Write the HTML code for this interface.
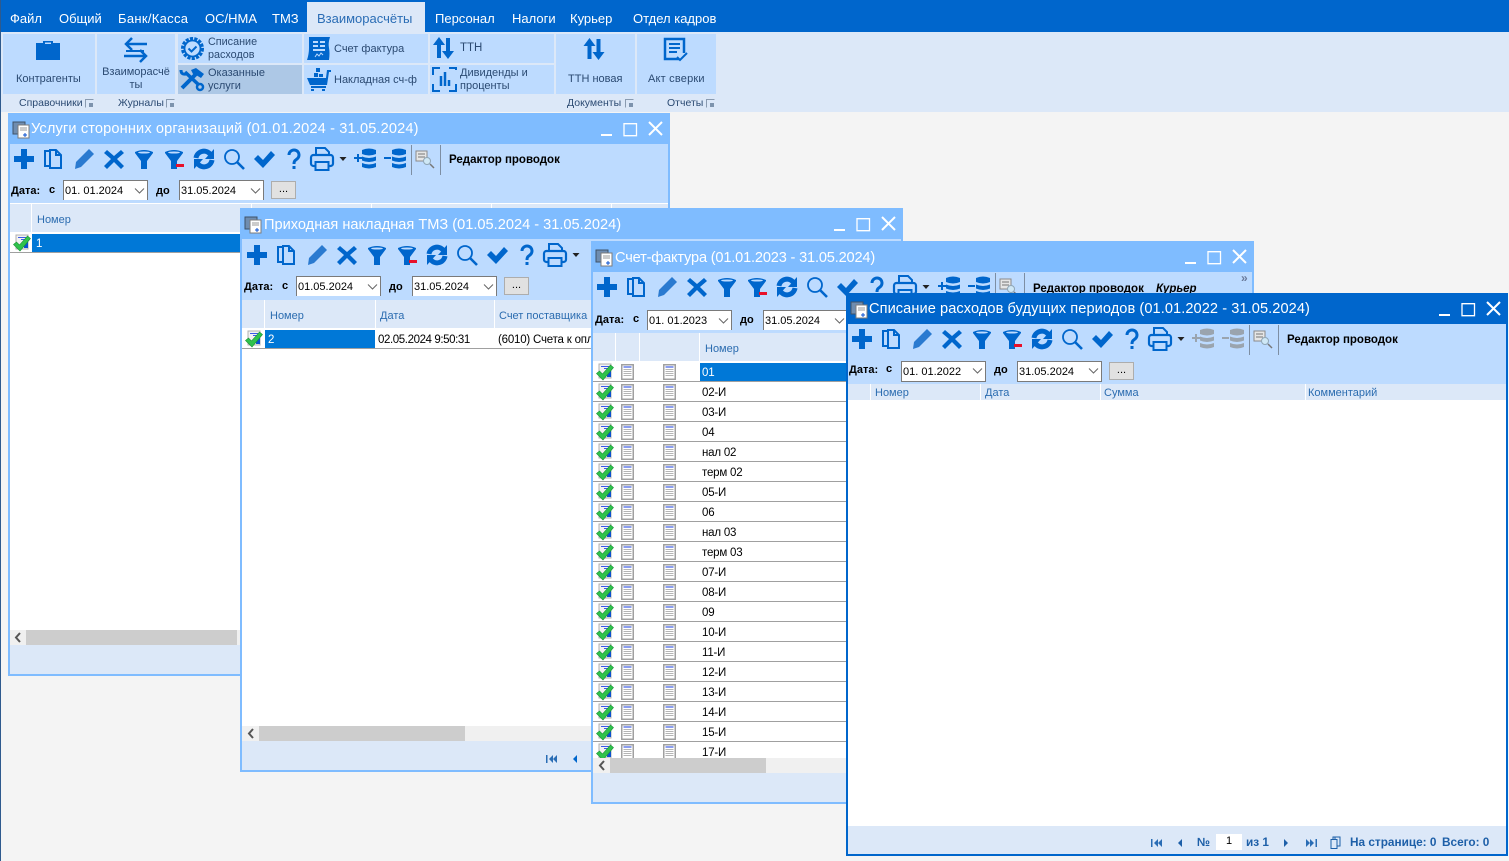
<!DOCTYPE html>
<html><head><meta charset="utf-8">
<style>
html,body{margin:0;padding:0}
body{width:1509px;height:861px;overflow:hidden;position:relative;background:#f4f4f4;font-family:"Liberation Sans",sans-serif;font-size:11.5px;color:#000}
div,span,svg{position:absolute;white-space:nowrap}
.edge{left:0;top:0;width:1px;height:861px;background:#2e5a8e}
.menu{left:0;top:0;width:1509px;height:32px;background:#0066cc}
.m{top:10px;color:#fff;font-size:13px;line-height:15px}
.rib{left:0;top:32px;width:1509px;height:80px;background:#dce8f8}
.b{background:#bddbff}
.rt{color:#2b4a72;font-size:11px;line-height:13px}
.g{top:97px;color:#2b4a72;font-size:10.5px;line-height:12px}
.gi{top:99px;width:7px;height:7px;border:1px solid #8a9bb0;border-right-color:#dce8f8;border-bottom-color:#dce8f8}
.gi::after{content:"";position:absolute;left:3px;top:3px;width:4px;height:4px;background:#7d93ad}
.w{background:#fff;overflow:hidden;box-sizing:border-box;border:2px solid #7fbcff}
.w.a{border-color:#0066cc}
.tt{left:-2px;top:-2px;right:-2px;height:31px;background:#7fbcff}
.a .tt{background:#0066cc}
.ti{left:21px;top:5px;color:#fff;font-size:14.6px;line-height:18px}
.tb{left:0;top:29px;right:0;height:59px;background:#bddbff}
.ed{font-weight:bold;font-size:11.5px;line-height:14px}
.dl{font-weight:bold;font-size:11px;line-height:13px}
.cb{width:85px;height:20px;box-sizing:border-box;background:#fff;border:1px solid #7a7a7a;border-bottom:0;font-size:11px;line-height:21px;padding-left:1px}
.dd{width:25px;height:18px;box-sizing:border-box;background:#e1e1e1;border:1px solid #adadad;text-align:center;font-size:11px;line-height:15px}
.h{background:#dce8f8;color:#2b6cb0;font-size:11px}
.h span{top:9px;line-height:14px}
.sep{width:1px;height:30px;background:#7d8ea3}
.sb{background:#f0f0f0;height:15px}
.th{background:#cdcdcd;height:15px;top:0}
.ft{background:#dce8f8}
.r{left:0;width:661px;height:18px;border-bottom:1px solid #a0a0a0}
.c{left:108px;top:1px;width:300px;height:18px;line-height:19px;padding-left:1px;font-size:11.5px;letter-spacing:-.2px}
.pg{color:#1d5fa8;font-weight:bold;font-size:11.8px;line-height:14px}
</style></head>
<body>
<svg width="0" height="0" style="left:0;top:0">
<defs>
<symbol id="tools" viewBox="0 0 400 24">
<path fill="#0066cc" d="M9 2h6v7h7v6h-7v7H9v-7H2V9h7z"/>
<g transform="translate(30 0)" fill="none" stroke="#0066cc" stroke-width="2"><path d="M8 4H3v15h5"/><path d="M8 3h6l5 5v13H8z"/><path d="M14 3v5h5"/></g>
<g transform="translate(60 0)"><path fill="#2a7ad0" d="M17 2l5 5L9 20l-6 2 1-7z"/></g>
<g transform="translate(90 0)"><path fill="#0066cc" d="M5 3l7 6 7-6 3 3-7 6 7 7-3 3-7-7-7 7-3-3 7-7-7-6z"/></g>
<g transform="translate(120 0)"><path fill="#0066cc" d="M3 5q9-4 18 0v1l-6 8v8H9v-8L3 6z"/><ellipse cx="12" cy="5.500" rx="6" ry="1" fill="#bddbff"/></g>
<g transform="translate(150 0)"><path fill="#0066cc" d="M3 5q9-4 18 0v1l-6 8v8H9v-8L3 6z"/><ellipse cx="12" cy="5.500" rx="6" ry="1" fill="#bddbff"/><rect x="14" y="17" width="8" height="3" fill="#e8102a"/></g>
<g transform="translate(180 0)"><path fill="none" stroke="#0066cc" stroke-width="5" d="M4 11a8 8 0 0 1 14-4M20 13a8 8 0 0 1-14 4"/><path fill="#0066cc" d="M22 2v10h-9zM2 22V12h9z"/></g>
<g transform="translate(210 0)" fill="none" stroke="#0066cc"><circle cx="10" cy="10" r="7" stroke-width="1.8"/><path stroke-width="2.6" d="M15 15l7 7"/></g>
<g transform="translate(240 0)"><path fill="#0066cc" d="M2 12l4-4 5 5 8-9 4 4-12 13z"/></g>
<g transform="translate(270 0)"><path fill="none" stroke="#0066cc" stroke-width="3" d="M7 8a5 5 0 1 1 8 4c-2 1.500-3 2-3 5"/><rect x="10.500" y="19" width="3" height="3" fill="#0066cc"/></g>
<g transform="translate(298 0)"><path fill="none" stroke="#0066cc" stroke-width="2" d="M6 8V1h9l4 4v3"/><rect x="1" y="8" width="22" height="11" rx="2.500" fill="none" stroke="#0066cc" stroke-width="2.200"/><rect x="5.500" y="15" width="13" height="8" fill="#bddbff" stroke="#0066cc" stroke-width="2"/></g>
<path fill="#222" d="M327.500 10h7l-3.500 4z"/>
</symbol>
<symbol id="dbp" viewBox="0 0 24 24"><g fill="#0066cc"><path d="M9 3q7-3 14 0v4q-7 3-14 0zM9 9.500q7 3 14 0v4q-7 3-14 0zM9 16q7 3 14 0v4q-7 3-14 0z"/><path d="M1 10h3V7h2v3h3v2H6v3H4v-3H1z"/></g></symbol>
<symbol id="dbm" viewBox="0 0 24 24"><g fill="#0066cc"><path d="M9 3q7-3 14 0v4q-7 3-14 0zM9 9.500q7 3 14 0v4q-7 3-14 0zM9 16q7 3 14 0v4q-7 3-14 0z"/><path d="M1 10h7v2H1z"/></g></symbol>
<symbol id="dbpg" viewBox="0 0 24 24"><g fill="#9aa4ae"><path d="M9 3q7-3 14 0v4q-7 3-14 0zM9 9.500q7 3 14 0v4q-7 3-14 0zM9 16q7 3 14 0v4q-7 3-14 0z"/><path d="M1 10h3V7h2v3h3v2H6v3H4v-3H1z"/></g></symbol>
<symbol id="dbmg" viewBox="0 0 24 24"><g fill="#9aa4ae"><path d="M9 3q7-3 14 0v4q-7 3-14 0zM9 9.500q7 3 14 0v4q-7 3-14 0zM9 16q7 3 14 0v4q-7 3-14 0z"/><path d="M1 10h7v2H1z"/></g></symbol>
<symbol id="ds" viewBox="0 0 20 20"><rect x="1" y="2" width="11" height="10" fill="#e6e6e6" stroke="#8a8a8a"/><path stroke="#777" d="M3 5h7M3 8h7"/><circle cx="12" cy="12" r="3.500" fill="#cfe8f6" stroke="#8fa5b5"/><path stroke="#777" stroke-width="1.500" d="M15 15l4 4"/></symbol>
<symbol id="wi" viewBox="0 0 18 18"><rect x="1" y="1" width="12" height="12" fill="#6f8db0" stroke="#3f5268"/><rect x="6" y="4" width="11" height="13" fill="#fff" stroke="#7c7c7c"/><path stroke="#999" d="M8 7h7M8 9h7"/><path stroke="#0a50d0" d="M11 14h4M13 12v4"/></symbol>
<symbol id="st" viewBox="0 0 18 18"><rect x="3" y="1" width="12" height="14" fill="#f2f2f2" stroke="#b0b0b0"/><path stroke="#3a5ae8" d="M5 3.500h8M8 5.500h5"/><path fill="#0a50d0" d="M11 8h4v6h-4z"/><path fill="#2fc24c" stroke="#1b9436" stroke-width=".6" d="M.5 10.500l3-2.500 3 3 8-9 3 2.500L7 17z"/></symbol>
<symbol id="doc" viewBox="0 0 13 16"><rect x=".75" y=".75" width="11.500" height="14.500" fill="#fff" stroke="#a0a0a0" stroke-width="1.500"/><path stroke="#1a3fe0" d="M2.500 3h8"/><path stroke="#b5b5b5" d="M2.500 5.500h8M2.500 7.500h8M2.500 9.500h8M2.500 11.500h8"/></symbol>
<symbol id="winb" viewBox="0 0 66 18"><path fill="#fff" d="M0 13h11v2H0z"/><path fill="none" stroke="#fff" stroke-width="1.300" d="M23 2.700h12.500v12H23z"/><path stroke="#fff" stroke-width="2" d="M48 1l13 13M61 1L48 14"/></symbol>
<symbol id="chv" viewBox="0 0 11 6"><path fill="none" stroke="#666" d="M1 .5l4.500 4.500L10 .5"/></symbol>
<symbol id="sl" viewBox="0 0 8 11"><path fill="none" stroke="#555" stroke-width="2" d="M6 1L2 5.500 6 10"/></symbol>
</defs>
</svg>

<div class="menu"></div>
<div class="m" style="left:10px;top:11px">Файл</div>
<div class="m" style="left:59px;top:11px">Общий</div>
<div class="m" style="left:118px;top:11px;letter-spacing:.3px">Банк/Касса</div>
<div class="m" style="left:205px;top:11px">ОС/НМА</div>
<div class="m" style="left:272px;top:11px">ТМЗ</div>
<div style="left:307px;top:2px;width:118px;height:30px;background:#dce8f8"></div>
<div class="m" style="left:317px;top:11px;color:#2a6db5">Взаиморасчёты</div>
<div class="m" style="left:435px;top:11px">Персонал</div>
<div class="m" style="left:512px;top:11px">Налоги</div>
<div class="m" style="left:570px;top:11px">Курьер</div>
<div class="m" style="left:633px;top:11px">Отдел кадров</div>

<div class="rib"></div>
<div class="b" style="left:3px;top:34px;width:92px;height:60px"></div>
<div class="b" style="left:97px;top:34px;width:78px;height:60px"></div>
<div class="b" style="left:178px;top:34px;width:124px;height:29px"></div>
<div style="left:178px;top:65px;width:124px;height:29px;background:#adc8e6"></div>
<div class="b" style="left:304px;top:34px;width:124px;height:29px"></div>
<div class="b" style="left:304px;top:65px;width:124px;height:29px"></div>
<div class="b" style="left:430px;top:34px;width:124px;height:29px"></div>
<div class="b" style="left:430px;top:65px;width:124px;height:29px"></div>
<div class="b" style="left:556px;top:34px;width:79px;height:60px"></div>
<div class="b" style="left:637px;top:34px;width:79px;height:60px"></div>

<svg style="left:36px;top:40px" width="24" height="20" viewBox="0 0 24 20"><path fill="#0066cc" d="M0 3h7V1h10v2h7v17H0zM9 2.500V4h6V2.500z"/></svg>
<svg style="left:123px;top:37px" width="26" height="26" viewBox="0 0 26 26" fill="none" stroke="#0066cc" stroke-width="2.500"><path d="M24 7H3M9 1L3 7l6 6"/><path d="M1 19h22M17 13l6 6-6 6"/><path d="M3 14h18" stroke-width="2"/></svg>
<svg style="left:180px;top:36px" width="25" height="25" viewBox="0 0 25 25"><circle cx="12.500" cy="12.500" r="9.500" fill="none" stroke="#0066cc" stroke-width="4" stroke-dasharray="3 1.200"/><circle cx="12.500" cy="12.500" r="8" fill="#bddbff" stroke="#0066cc" stroke-width="1.800"/><path fill="none" stroke="#0066cc" stroke-width="2" d="M8.500 12.500l3 3 5-5"/></svg>
<svg style="left:179px;top:67px" width="26" height="25" viewBox="0 0 26 25" fill="none" stroke="#0066cc"><path stroke-width="4" d="M3 21L19 5"/><path fill="#0066cc" stroke="none" d="M12 3l5-2 8 6-3 4-5-3-3-1z"/><path stroke-width="3.500" d="M6 5l15 14"/><path stroke-width="3" d="M2 3q0 5 5 4"/><circle cx="21" cy="20" r="3" stroke-width="2.500" fill="#adc8e6"/></svg>
<svg style="left:306px;top:36px" width="25" height="25" viewBox="0 0 25 25"><path fill="#0066cc" d="M3 1h21q-2 6-1 11t0 12H1q2-6 2-12T3 1z"/><path stroke="#bddbff" stroke-width="2" d="M7 6h5M14 6h5M7 10h5M14 10h5M7 14h12"/><path stroke="#bddbff" fill="none" d="M9 21l2-3 2 2 2-3 2 2"/></svg>
<svg style="left:306px;top:67px" width="25" height="25" viewBox="0 0 25 25"><path fill="#0066cc" d="M1 11h19l1-8h4v2h-2l-2 13H4zM5 19h15v2H5zM5 22h3v2H5zM16 22h3v2h-3zM8 6h4v4H8zM13 7h4v3h-4zM10 1h4v4h-4z"/></svg>
<svg style="left:432px;top:36px" width="24" height="24" viewBox="0 0 24 24"><path fill="#0066cc" d="M6.500 1l6 8h-4v13h-4V9h-4zM13.500 2h4v13h4l-6 8-6-8h4z" transform="translate(.5 0)"/></svg>
<svg style="left:432px;top:67px" width="25" height="25" viewBox="0 0 25 25" fill="none" stroke="#0066cc" stroke-width="2"><path d="M8 1H1v7M17 1h7v2M24 17v7h-7M8 24H1v-7"/><path stroke-width="2.500" d="M9 9v10M13 5v14M17 13v6"/></svg>
<svg style="left:583px;top:37px" width="24" height="24" viewBox="0 0 24 24"><path fill="#0066cc" d="M6.500 1l6 8h-4v13h-4V9h-4zM13.500 2h4v13h4l-6 8-6-8h4z"/></svg>
<svg style="left:663px;top:37px" width="26" height="26" viewBox="0 0 26 26"><path fill="none" stroke="#0066cc" stroke-width="2.500" d="M16 22H2V2h19v14"/><path stroke="#0066cc" stroke-width="2" d="M6 7h11M6 11h11M6 15h8"/><path fill="none" stroke="#0066cc" stroke-width="2" d="M14 20l3 3 7-7"/></svg>

<div class="rt" style="left:16px;top:73px">Контрагенты</div>
<div class="rt" style="left:101px;top:66px;width:70px;text-align:center">Взаиморасчё<br>ты</div>
<div class="rt" style="left:208px;top:36px;line-height:12.500px;font-size:10.800px">Списание<br>расходов</div>
<div class="rt" style="left:208px;top:67px;line-height:13px">Оказанные<br>услуги</div>
<div class="rt" style="left:334px;top:43px">Счет фактура</div>
<div class="rt" style="left:334px;top:74px">Накладная сч-ф</div>
<div class="rt" style="left:460px;top:42px;font-size:11.500px">ТТН</div>
<div class="rt" style="left:460px;top:67px;line-height:13px">Дивиденды и<br>проценты</div>
<div class="rt" style="left:568px;top:73px">ТТН новая</div>
<div class="rt" style="left:648px;top:73px;letter-spacing:.2px">Акт сверки</div>
<div class="g" style="left:19px">Справочники</div><div class="gi" style="left:85px"></div>
<div class="g" style="left:118px">Журналы</div><div class="gi" style="left:166px"></div>
<div class="g" style="left:567px">Документы</div><div class="gi" style="left:625px"></div>
<div class="g" style="left:667px">Отчеты</div><div class="gi" style="left:706px"></div>

<!-- Window 1 -->
<div class="w" style="left:8px;top:113px;width:662px;height:563px">
 <div class="tt"></div>
 <svg style="left:2px;top:6px" width="18" height="18"><use href="#wi"/></svg>
 <div class="ti" style="letter-spacing:.13px">Услуги сторонних организаций (01.01.2024 - 31.05.2024)</div>
 <svg style="left:591px;top:6px" width="66" height="18"><use href="#winb"/></svg>
 <div class="tb"></div>
 <svg style="left:2px;top:32px" width="400" height="24"><use href="#tools"/></svg>
 <svg style="left:343px;top:32px" width="24" height="24"><use href="#dbp"/></svg>
 <svg style="left:373px;top:32px" width="24" height="24"><use href="#dbm"/></svg>
 <div class="sep" style="left:401px;top:30px"></div>
 <svg style="left:405px;top:34px" width="20" height="20"><use href="#ds"/></svg>
 <div class="sep" style="left:430px;top:30px"></div>
 <div class="ed" style="left:439px;top:38px">Редактор проводок</div>
 <div class="dl" style="left:1px;top:70px">Дата:</div><div class="dl" style="left:39px;top:69px">с</div>
 <div class="cb" style="left:53px;top:65px">01. 01.2024</div>
 <svg style="left:124px;top:73px" width="11" height="6"><use href="#chv"/></svg>
 <div class="dl" style="left:146px;top:70px">до</div>
 <div class="cb" style="left:169px;top:65px">31.05.2024</div>
 <svg style="left:240px;top:73px" width="11" height="6"><use href="#chv"/></svg>
 <div class="dd" style="left:261px;top:66px">...</div>
 <div class="h" style="left:0;top:89px;width:660px;height:28px"><span style="left:27px">Номер</span></div>
 <div style="left:21px;top:89px;width:1px;height:28px;background:#fff"></div>
 <div style="left:241px;top:89px;width:1px;height:28px;background:#fff"></div>
 <div style="left:361px;top:89px;width:1px;height:28px;background:#fff"></div>
 <div style="left:481px;top:89px;width:1px;height:28px;background:#fff"></div>
 <div style="left:601px;top:89px;width:1px;height:28px;background:#fff"></div>
 <svg style="left:3px;top:119px" width="18" height="18"><use href="#st"/></svg>
 <div style="left:22px;top:119px;width:219px;height:18px;background:#0078d7;color:#fff;line-height:21px;padding-left:4px;box-sizing:border-box">1</div>
 <div style="left:0;top:137px;width:660px;height:1px;background:#a0a0a0"></div>
 <div class="sb" style="left:0;top:515px;width:660px"><div class="th" style="left:16px;width:211px"></div><svg style="left:4px;top:2px" width="8" height="11"><use href="#sl"/></svg></div>
 <div class="ft" style="left:0;top:530px;width:660px;height:31px"></div>
</div>

<!-- Window 2 -->
<div class="w" style="left:240px;top:208px;width:663px;height:564px">
 <div class="tt"></div>
 <svg style="left:2px;top:6px" width="18" height="18"><use href="#wi"/></svg>
 <div class="ti" style="left:22px;top:6px">Приходная накладная ТМЗ (01.05.2024 - 31.05.2024)</div>
 <svg style="left:592px;top:6px" width="66" height="18"><use href="#winb"/></svg>
 <div class="tb" style="height:61px"></div>
 <svg style="left:3px;top:33px" width="400" height="24"><use href="#tools"/></svg>
 <div class="dl" style="left:2px;top:71px">Дата:</div><div class="dl" style="left:40px;top:70px">с</div>
 <div class="cb" style="left:54px;top:66px">01.05.2024</div>
 <svg style="left:125px;top:74px" width="11" height="6"><use href="#chv"/></svg>
 <div class="dl" style="left:147px;top:71px">до</div>
 <div class="cb" style="left:170px;top:66px">31.05.2024</div>
 <svg style="left:241px;top:74px" width="11" height="6"><use href="#chv"/></svg>
 <div class="dd" style="left:262px;top:67px">...</div>
 <div class="h" style="left:0;top:90px;width:661px;height:28px"><span style="left:28px">Номер</span><span style="left:138px">Дата</span><span style="left:257px">Счет поставщика</span></div>
 <div style="left:22px;top:90px;width:1px;height:28px;background:#fff"></div>
 <div style="left:133px;top:90px;width:1px;height:28px;background:#fff"></div>
 <div style="left:252px;top:90px;width:1px;height:28px;background:#fff"></div>
 <svg style="left:3px;top:120px" width="18" height="18"><use href="#st"/></svg>
 <div style="left:23px;top:120px;width:110px;height:18px;background:#0078d7;color:#fff;line-height:21px;padding-left:3px;box-sizing:border-box">2</div>
 <div style="left:136px;top:120px;line-height:21px;letter-spacing:-.4px">02.05.2024 9:50:31</div>
 <div style="left:256px;top:120px;line-height:21px;letter-spacing:-.2px">(6010) Счета к опл</div>
 <div style="left:0;top:138px;width:661px;height:1px;background:#a0a0a0"></div>
 <div class="sb" style="left:0;top:516px;width:661px"><div class="th" style="left:17px;width:206px"></div><svg style="left:5px;top:2px" width="8" height="11"><use href="#sl"/></svg></div>
 <div class="ft" style="left:0;top:531px;width:661px;height:31px"></div>
 <svg style="left:303px;top:544px" width="12" height="10"><path fill="#2a6db5" d="M1 1h1.500v8H1zM8 1v8L4 5zM12 1v8L8 5z"/></svg>
 <svg style="left:329px;top:544px" width="8" height="10"><path fill="#0066cc" d="M6 1v8L2 5z"/></svg>
</div>

<!-- Window 3 -->
<div class="w" style="left:591px;top:241px;width:663px;height:563px">
 <div class="tt"></div>
 <svg style="left:2px;top:6px" width="18" height="18"><use href="#wi"/></svg>
 <div class="ti" style="left:22px;top:6px;letter-spacing:-.18px">Счет-фактура (01.01.2023 - 31.05.2024)</div>
 <svg style="left:592px;top:6px" width="66" height="18"><use href="#winb"/></svg>
 <div class="tb" style="height:61px"></div>
 <svg style="left:2px;top:32px" width="400" height="24"><use href="#tools"/></svg>
 <svg style="left:344px;top:32px" width="24" height="24"><use href="#dbp"/></svg>
 <svg style="left:374px;top:32px" width="24" height="24"><use href="#dbm"/></svg>
 <div class="sep" style="left:402px;top:30px"></div>
 <svg style="left:406px;top:34px" width="20" height="20"><use href="#ds"/></svg>
 <div class="sep" style="left:431px;top:30px"></div>
 <div class="ed" style="left:440px;top:39px">Редактор проводок</div>
 <div class="ed" style="left:563px;top:39px;font-style:italic">Курьер</div>
 <div style="left:648px;top:29px;color:#6a7a9a;font-size:12px;font-weight:bold;line-height:12px">»</div>
 <div class="dl" style="left:2px;top:71px">Дата:</div><div class="dl" style="left:40px;top:70px">с</div>
 <div class="cb" style="left:54px;top:67px">01. 01.2023</div>
 <svg style="left:125px;top:75px" width="11" height="6"><use href="#chv"/></svg>
 <div class="dl" style="left:147px;top:71px">до</div>
 <div class="cb" style="left:170px;top:67px">31.05.2024</div>
 <svg style="left:241px;top:75px" width="11" height="6"><use href="#chv"/></svg>
 <div class="h" style="left:0;top:90px;width:661px;height:28px"><span style="left:112px">Номер</span></div>
 <div style="left:22px;top:90px;width:1px;height:28px;background:#fff"></div>
 <div style="left:46px;top:90px;width:1px;height:28px;background:#fff"></div>
 <div style="left:106px;top:90px;width:1px;height:28px;background:#fff"></div>
 <div style="left:0;top:120px;width:661px;height:395px;overflow:hidden">
  <div class="r" style="top:0"><div style="left:107px;top:0;width:554px;height:18px;background:#0078d7"></div><div class="c" style="color:#fff">01</div></div>
  <div class="r" style="top:20px"><div class="c">02-И</div></div>
  <div class="r" style="top:40px"><div class="c">03-И</div></div>
  <div class="r" style="top:60px"><div class="c">04</div></div>
  <div class="r" style="top:80px"><div class="c">нал 02</div></div>
  <div class="r" style="top:100px"><div class="c">терм 02</div></div>
  <div class="r" style="top:120px"><div class="c">05-И</div></div>
  <div class="r" style="top:140px"><div class="c">06</div></div>
  <div class="r" style="top:160px"><div class="c">нал 03</div></div>
  <div class="r" style="top:180px"><div class="c">терм 03</div></div>
  <div class="r" style="top:200px"><div class="c">07-И</div></div>
  <div class="r" style="top:220px"><div class="c">08-И</div></div>
  <div class="r" style="top:240px"><div class="c">09</div></div>
  <div class="r" style="top:260px"><div class="c">10-И</div></div>
  <div class="r" style="top:280px"><div class="c">11-И</div></div>
  <div class="r" style="top:300px"><div class="c">12-И</div></div>
  <div class="r" style="top:320px"><div class="c">13-И</div></div>
  <div class="r" style="top:340px"><div class="c">14-И</div></div>
  <div class="r" style="top:360px"><div class="c">15-И</div></div>
  <div class="r" style="top:380px"><div class="c">17-И</div></div>
  <svg style="left:3px;top:0" width="18" height="400"><use href="#st" y="0" width="18" height="18"/><use href="#st" y="20" width="18" height="18"/><use href="#st" y="40" width="18" height="18"/><use href="#st" y="60" width="18" height="18"/><use href="#st" y="80" width="18" height="18"/><use href="#st" y="100" width="18" height="18"/><use href="#st" y="120" width="18" height="18"/><use href="#st" y="140" width="18" height="18"/><use href="#st" y="160" width="18" height="18"/><use href="#st" y="180" width="18" height="18"/><use href="#st" y="200" width="18" height="18"/><use href="#st" y="220" width="18" height="18"/><use href="#st" y="240" width="18" height="18"/><use href="#st" y="260" width="18" height="18"/><use href="#st" y="280" width="18" height="18"/><use href="#st" y="300" width="18" height="18"/><use href="#st" y="320" width="18" height="18"/><use href="#st" y="340" width="18" height="18"/><use href="#st" y="360" width="18" height="18"/><use href="#st" y="380" width="18" height="18"/></svg>
  <svg style="left:28px;top:0" width="13" height="400"><use href="#doc" y="1" width="13" height="16"/><use href="#doc" y="21" width="13" height="16"/><use href="#doc" y="41" width="13" height="16"/><use href="#doc" y="61" width="13" height="16"/><use href="#doc" y="81" width="13" height="16"/><use href="#doc" y="101" width="13" height="16"/><use href="#doc" y="121" width="13" height="16"/><use href="#doc" y="141" width="13" height="16"/><use href="#doc" y="161" width="13" height="16"/><use href="#doc" y="181" width="13" height="16"/><use href="#doc" y="201" width="13" height="16"/><use href="#doc" y="221" width="13" height="16"/><use href="#doc" y="241" width="13" height="16"/><use href="#doc" y="261" width="13" height="16"/><use href="#doc" y="281" width="13" height="16"/><use href="#doc" y="301" width="13" height="16"/><use href="#doc" y="321" width="13" height="16"/><use href="#doc" y="341" width="13" height="16"/><use href="#doc" y="361" width="13" height="16"/><use href="#doc" y="381" width="13" height="16"/></svg>
  <svg style="left:70px;top:0" width="13" height="400"><use href="#doc" y="1" width="13" height="16"/><use href="#doc" y="21" width="13" height="16"/><use href="#doc" y="41" width="13" height="16"/><use href="#doc" y="61" width="13" height="16"/><use href="#doc" y="81" width="13" height="16"/><use href="#doc" y="101" width="13" height="16"/><use href="#doc" y="121" width="13" height="16"/><use href="#doc" y="141" width="13" height="16"/><use href="#doc" y="161" width="13" height="16"/><use href="#doc" y="181" width="13" height="16"/><use href="#doc" y="201" width="13" height="16"/><use href="#doc" y="221" width="13" height="16"/><use href="#doc" y="241" width="13" height="16"/><use href="#doc" y="261" width="13" height="16"/><use href="#doc" y="281" width="13" height="16"/><use href="#doc" y="301" width="13" height="16"/><use href="#doc" y="321" width="13" height="16"/><use href="#doc" y="341" width="13" height="16"/><use href="#doc" y="361" width="13" height="16"/><use href="#doc" y="381" width="13" height="16"/></svg>
 </div>
 <div class="sb" style="left:0;top:515px;width:661px"><div class="th" style="left:17px;width:156px"></div><svg style="left:5px;top:2px" width="8" height="11"><use href="#sl"/></svg></div>
 <div class="ft" style="left:0;top:530px;width:661px;height:31px"></div>
</div>

<!-- Window 4 -->
<div class="w a" style="left:846px;top:293px;width:662px;height:563px">
 <div class="tt"></div>
 <svg style="left:2px;top:6px" width="18" height="18"><use href="#wi"/></svg>
 <div class="ti" style="letter-spacing:.07px">Списание расходов будущих периодов (01.01.2022 - 31.05.2024)</div>
 <svg style="left:591px;top:6px" width="66" height="18"><use href="#winb"/></svg>
 <div class="tb" style="height:60px"></div>
 <svg style="left:2px;top:32px" width="400" height="24"><use href="#tools"/></svg>
 <svg style="left:343px;top:32px" width="24" height="24"><use href="#dbpg"/></svg>
 <svg style="left:373px;top:32px" width="24" height="24"><use href="#dbmg"/></svg>
 <div class="sep" style="left:401px;top:30px"></div>
 <svg style="left:405px;top:34px" width="20" height="20"><use href="#ds"/></svg>
 <div class="sep" style="left:430px;top:30px"></div>
 <div class="ed" style="left:439px;top:38px">Редактор проводок</div>
 <div class="dl" style="left:1px;top:69px">Дата:</div><div class="dl" style="left:38px;top:68px">с</div>
 <div class="cb" style="left:53px;top:66px;height:21px;border-bottom:1px solid #7a7a7a;line-height:20px">01. 01.2022</div>
 <svg style="left:124px;top:73px" width="11" height="6"><use href="#chv"/></svg>
 <div class="dl" style="left:146px;top:69px">до</div>
 <div class="cb" style="left:169px;top:66px;height:21px;border-bottom:1px solid #7a7a7a;line-height:20px">31.05.2024</div>
 <svg style="left:240px;top:73px" width="11" height="6"><use href="#chv"/></svg>
 <div class="dd" style="left:261px;top:67px">...</div>
 <div class="h" style="left:0;top:89px;width:660px;height:16px"><span style="left:27px;top:2px">Номер</span><span style="left:137px;top:2px">Дата</span><span style="left:256px;top:2px">Сумма</span><span style="left:460px;top:2px">Комментарий</span></div>
 <div style="left:22px;top:89px;width:1px;height:16px;background:#fff"></div>
 <div style="left:132px;top:89px;width:1px;height:16px;background:#fff"></div>
 <div style="left:252px;top:89px;width:1px;height:16px;background:#fff"></div>
 <div style="left:457px;top:89px;width:1px;height:16px;background:#fff"></div>
 <div class="ft" style="left:0;top:531px;width:660px;height:28px"></div>
 <svg style="left:302px;top:543px" width="12" height="10"><path fill="#2a6db5" d="M1 1h1.500v8H1zM8 1v8L4 5zM12 1v8L8 5z"/></svg>
 <svg style="left:328px;top:543px" width="8" height="10"><path fill="#1d5fa8" d="M6 1v8L2 5z"/></svg>
 <div class="pg" style="left:349px;top:540px">№</div>
 <div style="left:368px;top:539px;width:26px;height:16px;background:#fff;text-align:center;line-height:15px;font-size:11px">1</div>
 <div class="pg" style="left:398px;top:540px">из 1</div>
 <svg style="left:434px;top:543px" width="8" height="10"><path fill="#1d5fa8" d="M2 1v8l4-4z"/></svg>
 <svg style="left:458px;top:543px" width="12" height="10"><path fill="#2a6db5" d="M0 1v8l4-4zM4 1v8l4-4zM9.500 1H11v8H9.500z"/></svg>
 <svg style="left:482px;top:541px" width="11" height="13" fill="none" stroke="#1d5fa8"><path d="M1 3.500h6v9H1zM3 3V1h7v9H7.500M5 1v2.500"/></svg>
 <div class="pg" style="left:502px;top:540px">На странице: 0</div>
 <div class="pg" style="left:594px;top:540px">Всего: 0</div>
</div>

<div class="edge"></div>
</body></html>
